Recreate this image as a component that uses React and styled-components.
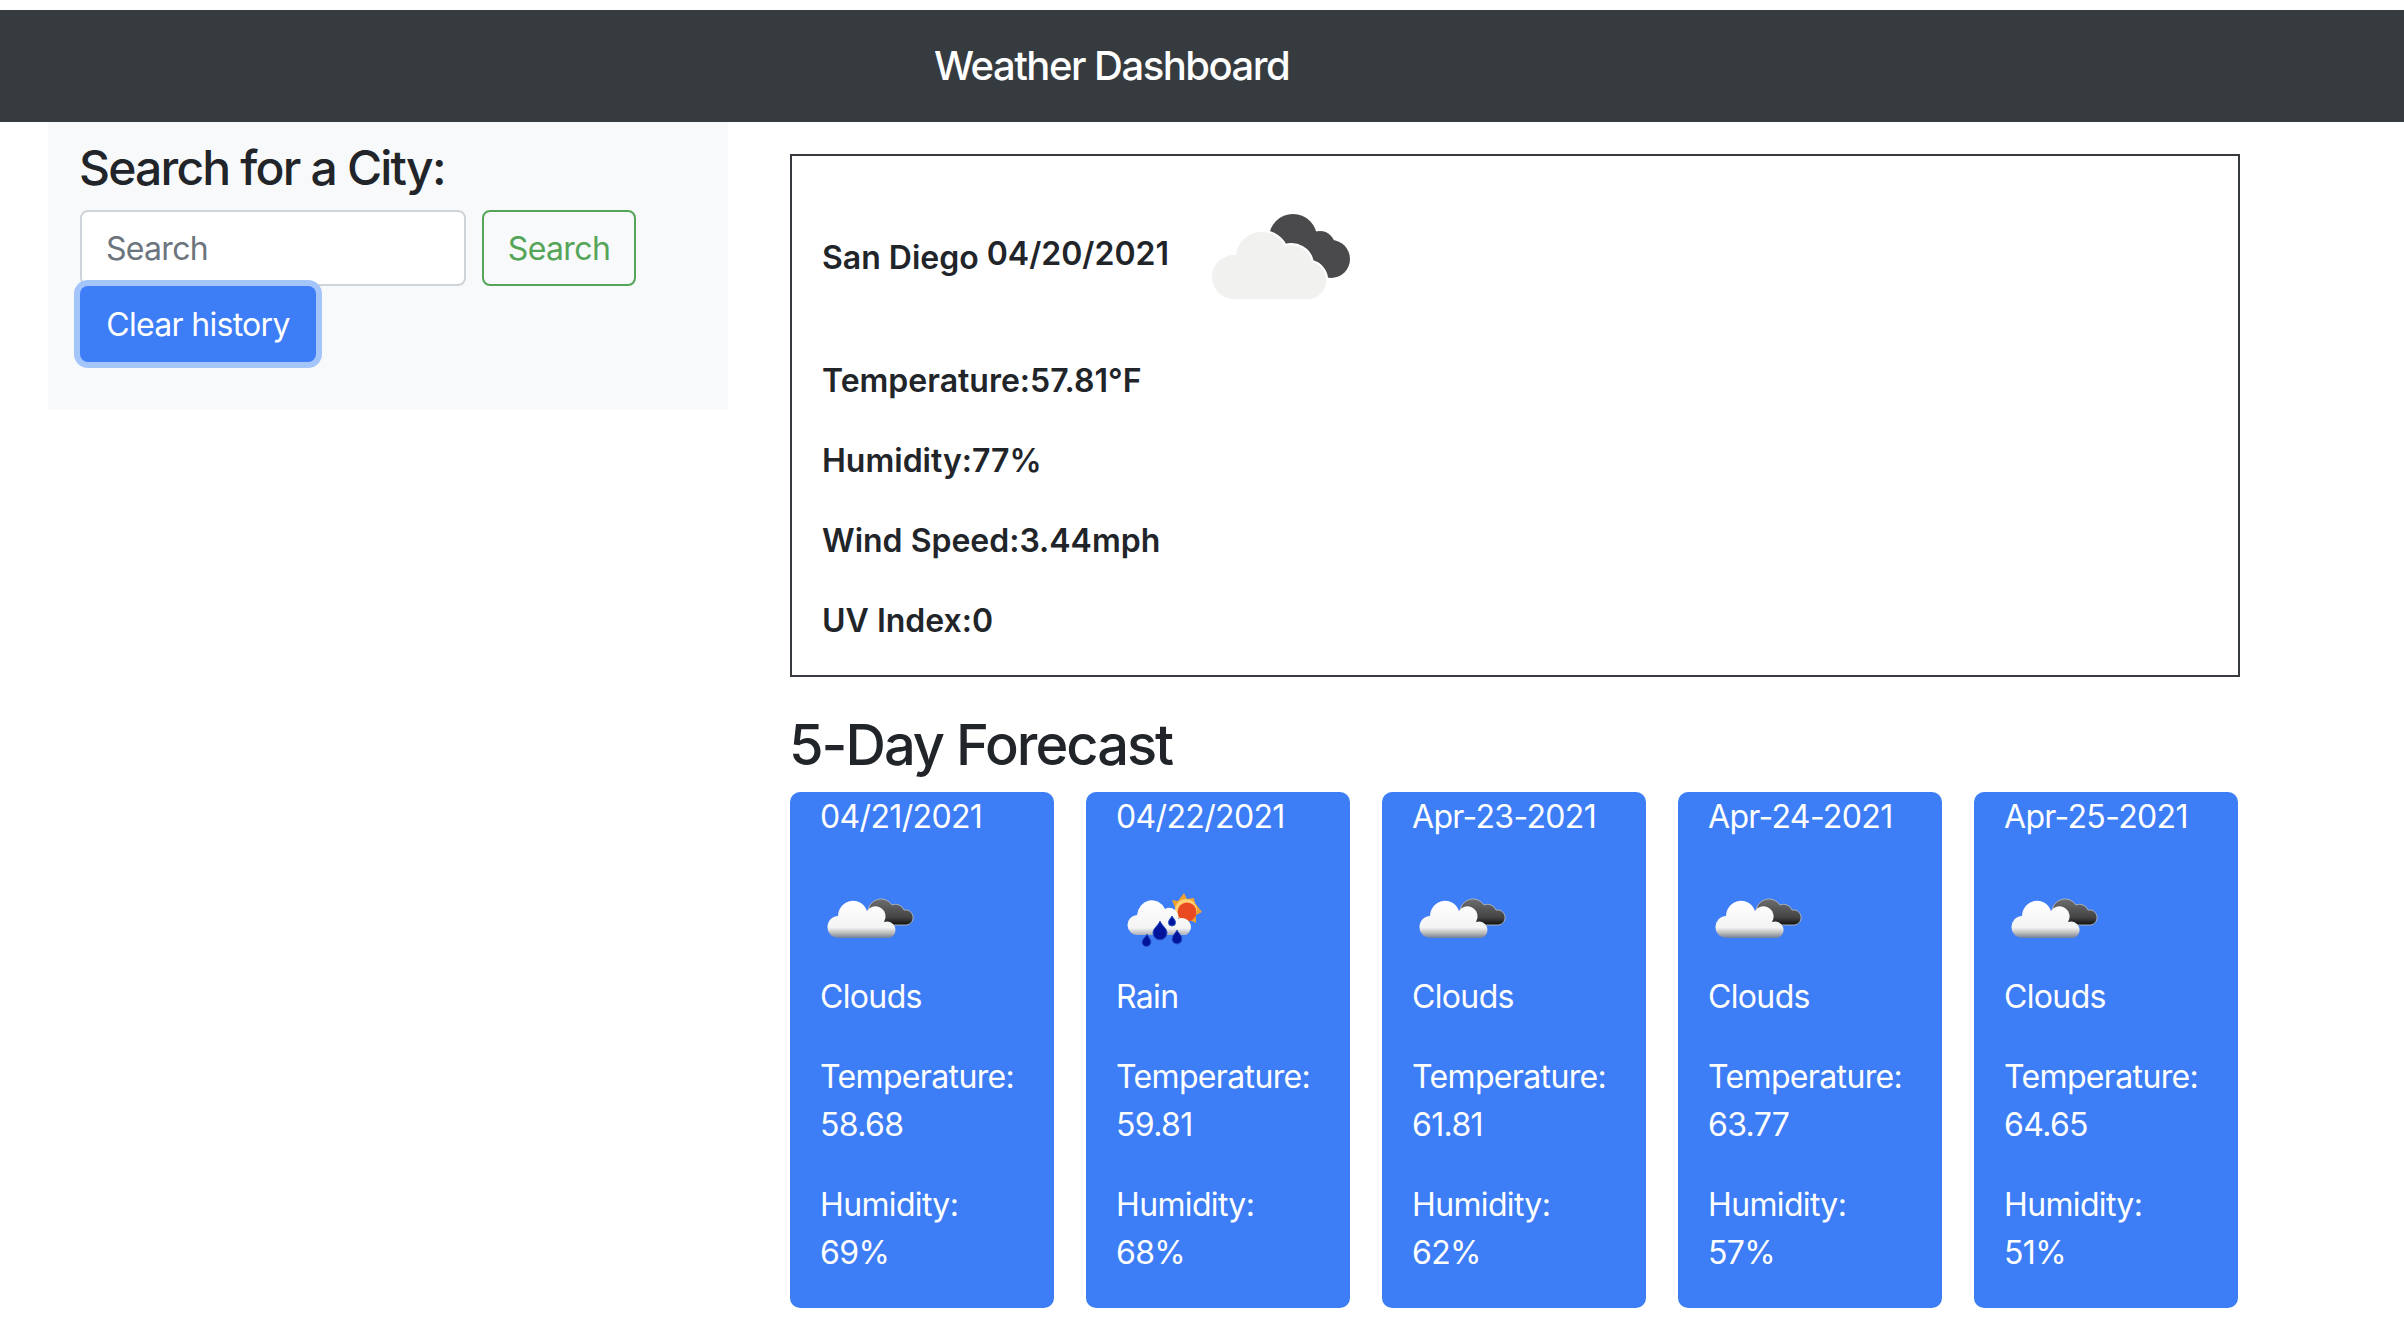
import React from "react";
import styled, { createGlobalStyle } from "styled-components";

const GlobalStyle = createGlobalStyle`
  html, body {
    margin: 0;
    padding: 0;
    background: #fff;
    color: #212529;
    font-family: Inter, "Liberation Sans", sans-serif;
    font-size: 32px;
    line-height: 48px;
    letter-spacing: -0.65px;
  }
`;

const Page = styled.div`
  padding-top: 10px;
  width: 2404px;
  height: 1334px;
  overflow: hidden;
`;

const Navbar = styled.nav`
  height: 112px;
  background: #363b3f;
  display: flex;
  align-items: center;
  padding-left: 934px;
  color: #fff;
  font-size: 40px;
  font-weight: 500;
  letter-spacing: -1.5px;
`;

const Content = styled.div`
  display: flex;
  padding-left: 48px;
  gap: 62px;
  align-items: flex-start;
`;

const Sidebar = styled.aside`
  width: 680px;
  height: 288px;
  box-sizing: border-box;
  background: #f8f9fa;
  padding: 17px 32px 0;
`;

const SidebarTitle = styled.h4`
  margin: 0 0 13px -1px;
  font-size: 48px;
  line-height: 58px;
  font-weight: 500;
  letter-spacing: -1.8px;
`;

const SearchForm = styled.form`
  display: flex;
  gap: 16px;
`;

const SearchInput = styled.input`
  width: 386px;
  height: 76px;
  box-sizing: border-box;
  border: 2px solid #ced4da;
  border-radius: 8px;
  background: #fff;
  padding: 0 24px;
  font: inherit;
  letter-spacing: -0.7px;
  outline: none;

  &::placeholder {
    color: #6c757d;
    opacity: 1;
  }
`;

const SearchButton = styled.button`
  width: 154px;
  height: 76px;
  box-sizing: border-box;
  border: 2px solid #55a559;
  border-radius: 8px;
  background: transparent;
  color: #55a559;
  font: inherit;
  letter-spacing: -0.6px;
  padding: 2px 0 0;
`;

const ClearButton = styled.button`
  display: block;
  position: relative;
  width: 236px;
  height: 76px;
  border: 0;
  border-radius: 8px;
  background: #3d7df6;
  color: #fff;
  font: inherit;
  letter-spacing: -0.7px;
  padding: 2px 0 0;
  box-shadow: 0 0 0 6px #a3c5fa;
`;

const Main = styled.main`
  width: 1450px;
  padding-top: 32px;
`;

const CurrentBox = styled.section`
  box-sizing: border-box;
  height: 523px;
  border: 2px solid #373b40;
  padding: 0 30px;
  font-weight: 600;
  letter-spacing: 0;
`;

const CurrentHeader = styled.div`
  height: 201px;
  display: flex;
  align-items: center;
`;

const CityName = styled.span`
  font-size: 32px;
  margin-top: 3px;
`;

const CityDate = styled.span`
  font-size: 32px;
  margin-left: 8px;
  margin-top: -5px;
`;

const BigIcon = styled.svg`
  width: 180px;
  height: 110px;
  margin-left: 21px;
  margin-top: -3px;
  flex: none;
  filter: blur(0.4px);
`;

const Stat = styled.p`
  margin: 0 0 32px;
`;

const ForecastTitle = styled.h2`
  margin: 36px 0 15px -1px;
  font-size: 56px;
  line-height: 64px;
  font-weight: 500;
  letter-spacing: -2px;
`;

const Cards = styled.div`
  display: grid;
  grid-template-columns: repeat(5, 264px);
  column-gap: 32px;
`;

const Card = styled.article`
  height: 516px;
  box-sizing: border-box;
  border-radius: 10px;
  background: #3d7df6;
  color: #fff;
  padding: 1px 30px 0;
`;

const CardLine = styled.p`
  margin: 0 0 32px;
`;

const CardIcon = styled.svg`
  display: block;
  width: 100px;
  height: 100px;
  filter: blur(0.6px);
`;

const BigCloud = () => (
  <BigIcon viewBox="0 0 180 110">
    <g fill="#4a4a4c">
      <circle cx="103" cy="38" r="24" />
      <circle cx="130" cy="46" r="15" />
      <circle cx="141" cy="59" r="19" />
      <path d="M88 30 L140 40 L150 75 L100 60Z" />
    </g>
    <g fill="#f1f1f0" stroke="#fff" strokeWidth="4" paintOrder="stroke">
      <path d="M42 99 A22 22 0 0 1 46 55 A26 26 0 0 1 95 46 A21 21 0 0 1 122 62 A19 19 0 0 1 121 99 Z" />
    </g>
  </BigIcon>
);

const CloudsIcon = () => (
  <CardIcon viewBox="0 3 100 100">
    <defs>
      <linearGradient id="darkCloud" x1="0" y1="0" x2="0" y2="1">
        <stop offset="0" stopColor="#6e6e6e" />
        <stop offset="0.7" stopColor="#444" />
        <stop offset="1" stopColor="#111" />
      </linearGradient>
      <linearGradient id="whiteCloud" x1="0" y1="0" x2="0" y2="1">
        <stop offset="0" stopColor="#fff" />
        <stop offset="0.72" stopColor="#f4f4f4" />
        <stop offset="0.88" stopColor="#b5b5b5" />
        <stop offset="1" stopColor="#6f7f9a" />
      </linearGradient>
    </defs>
    <path
      d="M48 42 A13 13 0 0 1 72 35 A9 9 0 0 1 84 40 A7.500 7.500 0 0 1 87 55 L60 55 Z"
      fill="url(#darkCloud)"
      stroke="#a9b0bb"
      strokeWidth="1"
    />
    <path
      d="M19 68 A11 11 0 0 1 18 46 A15 16 0 0 1 47 41 A10 10 0 0 1 64 52 A8.500 8.500 0 0 1 70 68 Z"
      fill="url(#whiteCloud)"
    />
  </CardIcon>
);

const RainIcon = () => (
  <CardIcon viewBox="-4 3 100 100">
    <defs>
      <linearGradient id="rainCloud" x1="0" y1="0" x2="0" y2="1">
        <stop offset="0" stopColor="#fff" />
        <stop offset="0.8" stopColor="#f4f4f4" />
        <stop offset="1" stopColor="#a9aeb8" />
      </linearGradient>
    </defs>
    <path
      d="M64 23 L67 29 L74 28 L75 33 L82 42 L76 45 L76 53 L70 50 L58 45 L52 30 L58 31 Z"
      fill="#f0a030"
    />
    <circle cx="66" cy="40" r="11" fill="#ffd070" />
    <circle cx="67" cy="42" r="9.500" fill="#ea4a22" />
    <path
      d="M18 65 A10 10 0 0 1 17 45 A15 17 0 0 1 45 39 A9 9 0 0 1 58 49 A8.500 8.500 0 0 1 66 65 Z"
      fill="url(#rainCloud)"
    />
    <g fill="#00159c" stroke="#2a56c8" strokeWidth="1">
      <path d="M40 51 C42 56 47 58 47 63 A7 7 0 0 1 33 63 C33 58 38 56 40 51Z" />
      <path d="M27 64 C28 67 31 69 31 72 A4.500 4.500 0 0 1 22 72 C22 69 26 67 27 64Z" />
      <path d="M57 60 C58 63 62 65 62 69 A5 5 0 0 1 52 69 C52 65 56 63 57 60Z" />
      <path d="M52 46 C53 48 55.500 50 55.500 52.500 A3.500 3.500 0 0 1 48.500 52.500 C48.500 50 51 48 52 46Z" />
    </g>
  </CardIcon>
);

const forecast = [
  { date: "04/21/2021", kind: "Clouds", temp: "58.68", humidity: "69%" },
  { date: "04/22/2021", kind: "Rain", temp: "59.81", humidity: "68%" },
  { date: "Apr-23-2021", kind: "Clouds", temp: "61.81", humidity: "62%" },
  { date: "Apr-24-2021", kind: "Clouds", temp: "63.77", humidity: "57%" },
  { date: "Apr-25-2021", kind: "Clouds", temp: "64.65", humidity: "51%" },
];

export default function App() {
  return (
    <Page>
      <GlobalStyle />
      <Navbar>Weather Dashboard</Navbar>
      <Content>
        <Sidebar>
          <SidebarTitle>Search for a City:</SidebarTitle>
          <SearchForm>
            <SearchInput placeholder="Search" />
            <SearchButton type="button">Search</SearchButton>
          </SearchForm>
          <ClearButton type="button">Clear history</ClearButton>
        </Sidebar>
        <Main>
          <CurrentBox>
            <CurrentHeader>
              <CityName>San Diego</CityName>
              <CityDate>04/20/2021</CityDate>
              <BigCloud />
            </CurrentHeader>
            <Stat>Temperature:57.81°F</Stat>
            <Stat>Humidity:77%</Stat>
            <Stat>Wind Speed:3.44mph</Stat>
            <Stat>UV Index:0</Stat>
          </CurrentBox>
          <ForecastTitle>5-Day Forecast</ForecastTitle>
          <Cards>
            {forecast.map((day) => (
              <Card key={day.date}>
                <CardLine>{day.date}</CardLine>
                {day.kind === "Rain" ? <RainIcon /> : <CloudsIcon />}
                <CardLine>{day.kind}</CardLine>
                <CardLine>
                  Temperature:
                  <br />
                  {day.temp}
                </CardLine>
                <CardLine>
                  Humidity:
                  <br />
                  {day.humidity}
                </CardLine>
              </Card>
            ))}
          </Cards>
        </Main>
      </Content>
    </Page>
  );
}
